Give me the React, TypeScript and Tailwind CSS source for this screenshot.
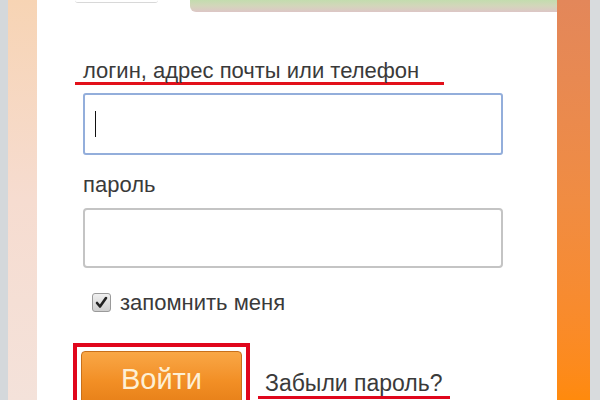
export default function App() {
  return (
    <div className="flex h-[400px] w-[600px] overflow-hidden bg-white font-['Liberation_Sans',Arial,sans-serif] text-[#3a3a3a]">
      {/* left page edge */}
      <div className="w-[8px] shrink-0 bg-[#d4d8db]" />
      <div className="w-[29px] shrink-0 bg-gradient-to-b from-[#f7d4b4] via-[#f6dcd0] to-[#f4e2da]" />

      {/* login panel */}
      <div className="flex w-[520px] shrink-0 flex-col bg-white">
        <div className="flex h-[12px] items-start">
          <div className="ml-[38px] h-[3px] w-[83px] rounded-b-sm border-b border-[#d8d8d8] bg-white" />
          <div className="ml-[32px] h-[12px] flex-1 rounded-bl-[6px] bg-gradient-to-b from-[#c3dcae] via-[#d3d6bb] to-[#ddc6c6]" />
        </div>

        <div className="pl-[46px]">
          <div className="mt-[47px] -ml-[8px] w-[369px] border-b-[3px] border-[#e2101a] pl-[8px] text-[22px] leading-[23px]">
            логин, адрес почты или телефон
          </div>

          <div className="mt-[8px] flex h-[62px] w-[420px] items-center rounded-[3px] border-2 border-[#93aedb] bg-white pl-[10px]">
            <div className="h-[26px] w-px bg-[#111]" />
          </div>

          <div className="mt-[18px] text-[22px] leading-[24px]">пароль</div>

          <div className="mt-[11px] h-[60px] w-[420px] rounded-[4px] border-2 border-[#c4c4c4] bg-white" />

          <div className="mt-[24px] flex h-[21px] items-center pl-[9px]">
            <div className="flex h-[19px] w-[19px] items-center justify-center rounded-[3px] border border-[#9a9a9a] bg-gradient-to-b from-[#f0f0f0] to-[#cfcfcf]">
              <svg width="13" height="13" viewBox="0 0 13 13">
                <path d="M2 7 L5 10.5 L11 2" fill="none" stroke="#222" strokeWidth="2.6" strokeLinecap="round" strokeLinejoin="round" />
              </svg>
            </div>
            <span className="ml-[9px] text-[22px] leading-[22px]">запомнить меня</span>
          </div>

          <div className="mt-[30px] flex items-start">
            <div className="-ml-[10px] border-[4px] border-[#e0061c] p-[4px] pb-0">
              <div className="flex h-[60px] w-[161px] items-start justify-center rounded-[4px] border border-[#c8701a] bg-gradient-to-b from-[#f9a745] via-[#f28f25] to-[#e47c14] pt-[10px] text-[29px] leading-[34px] text-[#fdf0d6]">
                Войти
              </div>
            </div>
            <div className="ml-[8px] mt-[28px] border-b-[3px] border-[#e0061c] px-[7px] text-[23px] leading-[25px]">
              Забыли пароль?
            </div>
          </div>
        </div>
      </div>

      {/* right page edge */}
      <div className="w-[33px] shrink-0 bg-gradient-to-b from-[#e3875a] via-[#f08c42] to-[#ff8a0c]" />
      <div className="w-[10px] shrink-0 bg-[#d8dbdd]" />
    </div>
  )
}
